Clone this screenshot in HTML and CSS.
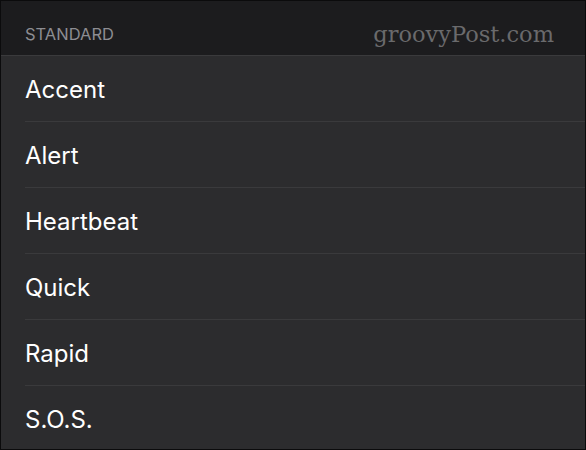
FILE: index.html
```html
<!DOCTYPE html>
<html lang="en">
<head>
    <meta charset="UTF-8">
    <meta name="viewport" content="width=device-width, initial-scale=1.0">
    <title>Standard</title>
    <link rel="stylesheet" href="styles.css">
</head>
<body>
    <div class="screen">
        <header class="section-header">
            <span class="section-title">STANDARD</span>
            <span class="watermark">groovyPost.com</span>
        </header>
        <ul class="list">
            <li class="list-item">Accent</li>
            <li class="list-item">Alert</li>
            <li class="list-item">Heartbeat</li>
            <li class="list-item">Quick</li>
            <li class="list-item">Rapid</li>
            <li class="list-item">S.O.S.</li>
        </ul>
    </div>
</body>
</html>
```

FILE: styles.css
```css
body {
    margin: 0;
    padding: 0;
    background-color: #000;
    font-family: Inter, "Liberation Sans", Arial, sans-serif;
}

.screen {
    width: 586px;
    height: 450px;
    box-sizing: border-box;
    border: 1px solid #0b0b0c;
    background-color: #2c2c2e;
    overflow: hidden;
}

.section-header {
    height: 55px;
    box-sizing: border-box;
    padding: 12px 31px 0 24px;
    display: flex;
    align-items: center;
    justify-content: space-between;
    background-color: #1c1c1e;
    border-bottom: 1px solid #3a3a3c;
}

.section-title {
    font-size: 16.5px;
    color: #8d8d92;
}

.watermark {
    font-family: "DejaVu Serif", "Liberation Serif", serif;
    font-size: 22.5px;
    color: #6a6a6c;
}

.list {
    list-style: none;
    margin: 0;
    padding: 0 0 0 24px;
}

.list-item {
    height: 66px;
    box-sizing: border-box;
    padding-top: 2px;
    display: flex;
    align-items: center;
    font-size: 24px;
    color: #fff;
    border-bottom: 1px solid #3a3a3c;
}
```
